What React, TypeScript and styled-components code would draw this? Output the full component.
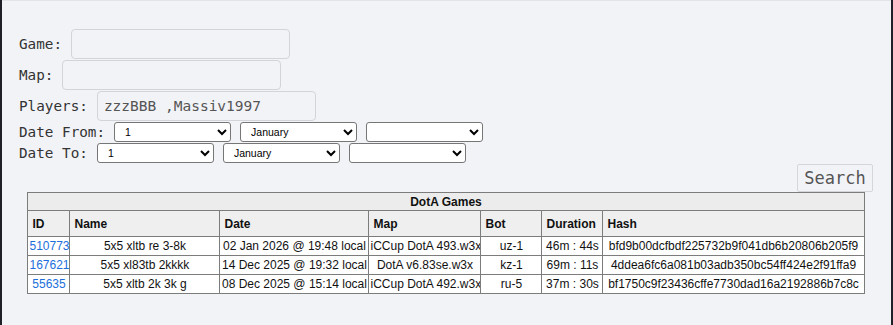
import React from "react";
import styled, { createGlobalStyle } from "styled-components";

const GlobalStyle = createGlobalStyle`
  html, body {
    margin: 0;
    padding: 0;
    background: #1f1f27;
  }
  * { box-sizing: border-box; }
`;

const games = [
  {
    id: "510773",
    name: "5x5 xltb re 3-8k",
    date: "02 Jan 2026 @ 19:48 local",
    map: "iCCup DotA 493.w3x",
    bot: "uz-1",
    duration: "46m : 44s",
    hash: "bfd9b00dcfbdf225732b9f041db6b20806b205f9",
  },
  {
    id: "167621",
    name: "5x5 xl83tb 2kkkk",
    date: "14 Dec 2025 @ 19:32 local",
    map: "DotA v6.83se.w3x",
    bot: "kz-1",
    duration: "69m : 11s",
    hash: "4ddea6fc6a081b03adb350bc54ff424e2f91ffa9",
  },
  {
    id: "55635",
    name: "5x5 xltb 2k 3k g",
    date: "08 Dec 2025 @ 15:14 local",
    map: "iCCup DotA 492.w3x",
    bot: "ru-5",
    duration: "37m : 30s",
    hash: "bf1750c9f23436cffe7730dad16a2192886b7c8c",
  },
];

const days = Array.from({ length: 31 }, (_, i) => String(i + 1));
const months = [
  "January", "February", "March", "April", "May", "June",
  "July", "August", "September", "October", "November", "December",
];

const DateSelects = () => (
  <>
    <Select defaultValue="1">
      {days.map((d) => (
        <option key={d}>{d}</option>
      ))}
    </Select>
    <Select defaultValue="January">
      {months.map((m) => (
        <option key={m}>{m}</option>
      ))}
    </Select>
    <Select defaultValue="">
      <option value=""></option>
      <option>2025</option>
      <option>2026</option>
    </Select>
  </>
);

const App = () => {
  return (
    <Page>
      <GlobalStyle />
      <Form>
        <InputRow>
          <Label>Game:</Label>
          <TextInput />
        </InputRow>
        <InputRow>
          <Label>Map:</Label>
          <TextInput />
        </InputRow>
        <InputRow>
          <Label>Players:</Label>
          <TextInput defaultValue="zzzBBB ,Massiv1997" />
        </InputRow>
        <SelectRow>
          <Label>Date From:</Label>
          <DateSelects />
        </SelectRow>
        <SelectRow>
          <Label>Date To:</Label>
          <DateSelects />
        </SelectRow>
        <ButtonRow>
          <SearchButton>Search</SearchButton>
        </ButtonRow>
      </Form>

      <Table>
        <colgroup>
          <col style={{ width: 42 }} />
          <col style={{ width: 150 }} />
          <col style={{ width: 149 }} />
          <col style={{ width: 112 }} />
          <col style={{ width: 61 }} />
          <col style={{ width: 61 }} />
          <col style={{ width: 261 }} />
        </colgroup>
        <thead>
          <tr>
            <TitleCell colSpan={7}>DotA Games</TitleCell>
          </tr>
          <tr>
            <HeadCell>ID</HeadCell>
            <HeadCell>Name</HeadCell>
            <HeadCell>Date</HeadCell>
            <HeadCell>Map</HeadCell>
            <HeadCell>Bot</HeadCell>
            <HeadCell>Duration</HeadCell>
            <HeadCell>Hash</HeadCell>
          </tr>
        </thead>
        <tbody>
          {games.map((g) => (
            <tr key={g.id}>
              <Cell>
                <GameLink href="#">{g.id}</GameLink>
              </Cell>
              <Cell>{g.name}</Cell>
              <Cell>{g.date}</Cell>
              <Cell>{g.map}</Cell>
              <Cell>{g.bot}</Cell>
              <Cell>{g.duration}</Cell>
              <Cell>{g.hash}</Cell>
            </tr>
          ))}
        </tbody>
      </Table>
    </Page>
  );
};

export default App;

const Page = styled.div`
  margin: 0 2px;
  height: 325px;
  background: #f2f3f7;
  border-top: 1px solid #e3e4e9;
  padding: 27px 18px 0 17px;
  overflow: hidden;
`;

const Form = styled.form`
  display: flex;
  flex-direction: column;
`;

const Label = styled.span`
  font-family: "DejaVu Sans Mono", "Liberation Mono", monospace;
  font-size: 14.3px;
  color: #333;
  margin-right: 9px;
  white-space: nowrap;
`;

const InputRow = styled.div`
  display: flex;
  align-items: center;
  height: 31px;
`;

const TextInput = styled.input`
  width: 219px;
  height: 30px;
  padding: 0 6px;
  background: #f2f3f7;
  border: 1px solid #d3d4d9;
  border-radius: 4px;
  font-family: "DejaVu Sans Mono", "Liberation Mono", monospace;
  font-size: 14.5px;
  color: #555;
  outline: none;
`;

const SelectRow = styled.div`
  display: flex;
  align-items: center;
  gap: 9px;
  height: 21px;

  ${Label} {
    margin-right: 0;
  }
`;

const Select = styled.select`
  width: 117px;
  height: 20px;
  padding: 0 0 0 6px;
  background: #fff;
  border: 1px solid #767676;
  border-radius: 3px;
  font-family: "Liberation Sans", Arial, sans-serif;
  font-size: 10.5px;
  color: #000;
`;

const ButtonRow = styled.div`
  display: flex;
  justify-content: flex-end;
  margin-top: 1px;
`;

const SearchButton = styled.button`
  width: 76px;
  height: 28px;
  padding: 0;
  background: #f2f3f7;
  border: 1px solid #d5d6db;
  border-radius: 2px;
  font-family: "DejaVu Sans Mono", "Liberation Mono", monospace;
  font-size: 17px;
  color: #555;
`;

const Table = styled.table`
  width: 836px;
  margin: 0 auto;
  table-layout: fixed;
  border-collapse: collapse;
  border: 1px solid #7c7c7c;
  font-family: "Liberation Sans", Arial, sans-serif;
  font-size: 12px;
  color: #111;
`;

const TitleCell = styled.th`
  height: 18px;
  padding: 0;
  background: #ececec;
  border: 1px solid #7c7c7c;
  font-weight: bold;
  text-align: center;
`;

const HeadCell = styled.th`
  height: 26px;
  padding: 0 4px;
  background: #efefef;
  border: 1px solid #7c7c7c;
  font-weight: bold;
  text-align: left;
`;

const Cell = styled.td`
  height: 19px;
  padding: 0 1px;
  background: #fff;
  border: 1px solid #7c7c7c;
  text-align: center;
  white-space: nowrap;
  overflow: hidden;
`;

const GameLink = styled.a`
  color: #1b6fdc;
  text-decoration: none;
`;
